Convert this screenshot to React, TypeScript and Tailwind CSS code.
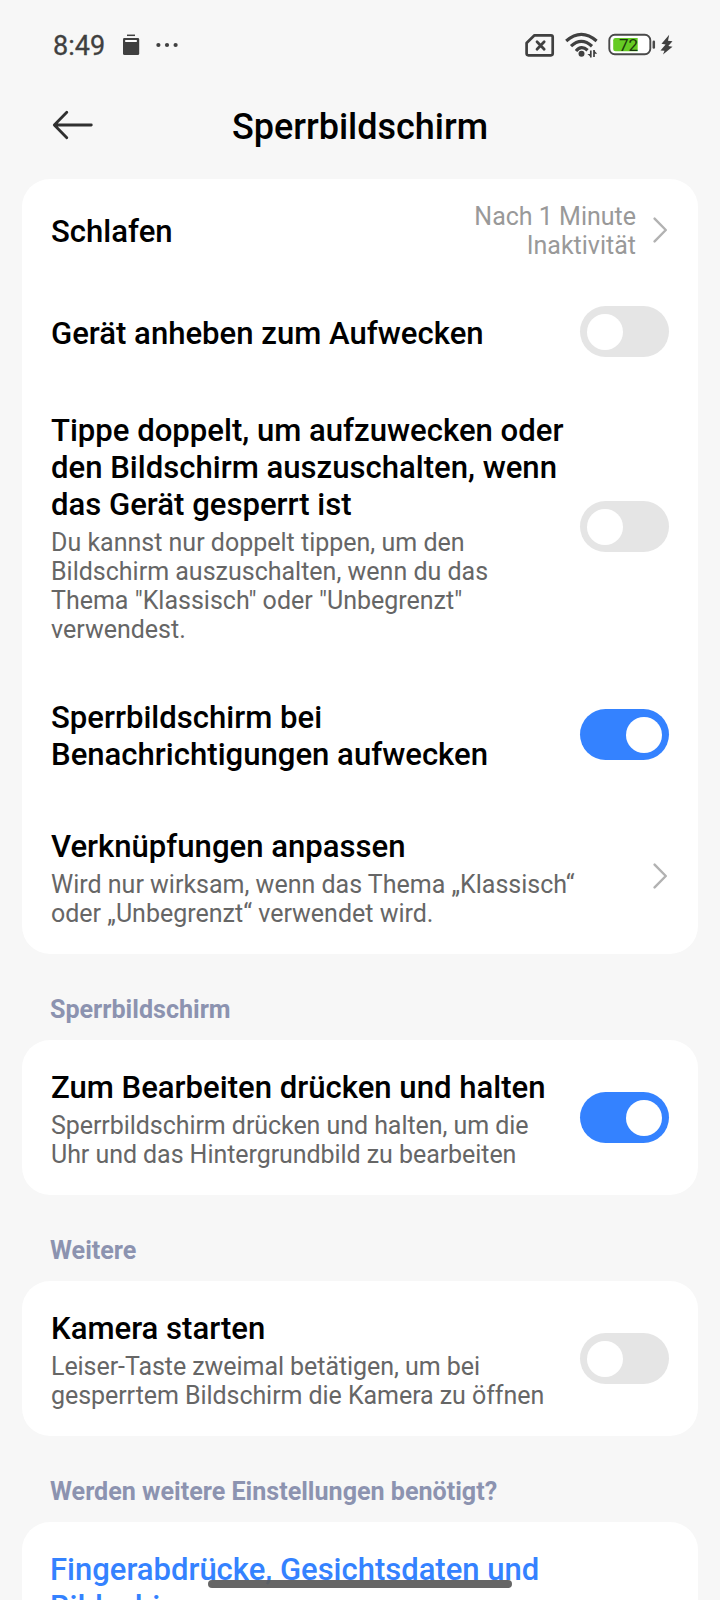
import type { ReactNode } from "react";

function Toggle({ on = false }: { on?: boolean }) {
  return (
    <button
      role="switch"
      aria-checked={on}
      className={`flex h-[51px] w-[89px] shrink-0 items-center rounded-full p-[7px] ${on ? "justify-end bg-[#3482ff]" : "justify-start bg-[#e5e5e5]"}`}
    >
      <span className="size-9 rounded-full bg-white" />
    </button>
  );
}

function Chevron() {
  return (
    <svg className="h-7 w-4 shrink-0" viewBox="0 0 16 28" fill="none" stroke="#b2b2b2" strokeWidth="2.4" strokeLinecap="round" strokeLinejoin="round">
      <path d="M1.600 2.600 12.800 14 1.600 25.400" />
    </svg>
  );
}

function Row({ title, sub, className, children }: { title: ReactNode; sub?: ReactNode; className: string; children: ReactNode }) {
  return (
    <div className={`flex items-center justify-between pr-[29px] pl-[29px] ${className}`}>
      <div className="pt-[3px] whitespace-nowrap">
        <div className="text-[31.1px] leading-[37px] font-medium text-black">{title}</div>
        {sub && <div className="mt-[5px] text-[25px] leading-[29px] text-[#666666]">{sub}</div>}
      </div>
      {children}
    </div>
  );
}

function Heading({ children }: { children: ReactNode }) {
  return <h2 className="flex h-[86px] items-center pt-6 pl-[28px] text-[25.1px] leading-[29px] font-bold text-[#8c93b0]">{children}</h2>;
}

function StatusBar() {
  return (
    <div className="flex h-[90px] items-center text-[#404040]">
      <span className="ml-[53px] w-[52px] pt-0.5 text-[27px] leading-8 whitespace-nowrap [-webkit-text-stroke:0.3px_#404040]">8:49</span>
      <svg className="ml-[17px] h-6 w-[18px]" viewBox="0 0 18 24">
        <path d="M5 2.300h8" stroke="#404040" strokeWidth="1.500" />
        <path d="M2.200 5h13.600q1.400 0 1.400 1.400V20.500q0 1.500-1.600 1.500H2.600Q1 22 1 20.500V6.400Q1 5 2.200 5Z" fill="#404040" />
        <path d="M3.200 8h11.600" stroke="#fff" strokeWidth="2" />
      </svg>
      <svg className="ml-4 h-6 w-6" viewBox="0 0 24 24" fill="#404040">
        <circle cx="2.400" cy="12" r="2.100" />
        <circle cx="11" cy="12" r="2.100" />
        <circle cx="19.600" cy="12" r="2.100" />
      </svg>
      <div className="mr-[47px] ml-auto flex items-center">
        <svg className="h-6 w-[30px]" viewBox="0 0 30 24" fill="none" stroke="#404040">
          <path d="M9.500 2.300H26q1.700 0 1.700 1.700V20.600q0 1.700-1.700 1.700H3.300q-1.700 0-1.700-1.700V10Z" strokeWidth="2.700" strokeLinejoin="round" />
          <path d="m12 8.700 7.200 7.600m0-7.600L12 16.300" strokeWidth="2.700" strokeLinecap="round" />
        </svg>
        <svg className="ml-2.5 h-[26px] w-[34px]" viewBox="0 0 34 26" fill="none" stroke="#404040" strokeWidth="3.200">
          <path d="M1.200 9Q16.300-4.200 31.600 9M6 14.200Q16.300 4.600 27 14.200M11 19Q16.300 12.600 22.600 18.300" />
          <circle cx="16.500" cy="21.800" r="3" fill="#404040" stroke="none" />
          <path d="M25.800 18.500v7M29 18v7" strokeWidth="1.700" />
          <path d="m26 25.300-3.600-3.300H26ZM29 18.200l3.200 3.600H29Z" fill="#404040" stroke="none" />
        </svg>
        <svg className="ml-[9px] h-6 w-[48px]" viewBox="0 0 48 24">
          <rect x="1.300" y="1.700" width="41" height="19.600" rx="5.500" fill="#fff" stroke="#4a4a4a" strokeWidth="1.900" />
          <path d="M7.500 5h22.200v13.300H7.500q-2.300 0-2.300-2.300V7.300Q5.200 5 7.500 5Z" fill="#65cb24" />
          <path d="M45.800 8.800v5.600" stroke="#4a4a4a" strokeWidth="2.500" strokeLinecap="round" />
          <text x="20.500" y="18" textAnchor="middle" fontFamily="Roboto, sans-serif" fontSize="17" fontWeight="400" fill="#1b3a0c">72</text>
        </svg>
        <svg className="ml-[4px] h-[22px] w-[13px]" viewBox="0 0 13 22" fill="#404040">
          <path d="M9.200.700 1.500 9.800 5.600 10.500.500 16.500 4.500 16.700 3 20.500 12.500 12.800 8.300 12 12.500 7.300 8 6.700Z" />
        </svg>
      </div>
    </div>
  );
}

export default function App() {
  return (
    <div className="relative h-[1600px] w-[720px] overflow-hidden bg-[#f7f7f7] font-[Roboto,sans-serif]">
      <StatusBar />
      <header className="grid h-[89px] grid-cols-[1fr_auto_1fr] items-center pb-4">
        <svg className="mb-1 ml-[52px] h-8 w-11" viewBox="0 0 44 32" fill="none" stroke="#303030" strokeWidth="2.800" strokeLinecap="round" strokeLinejoin="round">
          <path d="M14.800 3.300 2.300 16 14.800 28.700M2.500 16H39.300" />
        </svg>
        <h1 className="text-[36px] leading-[44px] font-medium text-black">Sperrbildschirm</h1>
      </header>

      <main className="px-[22px]">
        <section className="rounded-[28px] bg-white">
          <Row title="Schlafen" className="h-[102px]">
            <div className="flex items-center gap-[17px]">
              <div className="pt-0.5 text-right text-[25px] leading-[29px] text-[#999999]">Nach 1 Minute<br />Inaktivität</div>
              <Chevron />
            </div>
          </Row>
          <Row title="Gerät anheben zum Aufwecken" className="h-[101px]"><Toggle /></Row>
          <Row
            title={<>Tippe doppelt, um aufzuwecken oder<br />den Bildschirm auszuschalten, wenn<br />das Gerät gesperrt ist</>}
            sub={<>Du kannst nur doppelt tippen, um den<br />Bildschirm auszuschalten, wenn du das<br />Thema "Klassisch" oder "Unbegrenzt"<br />verwendest.</>}
            className="h-[289px]"
          ><Toggle /></Row>
          <Row title={<>Sperrbildschirm bei<br />Benachrichtigungen aufwecken</>} className="h-[127px]"><Toggle on /></Row>
          <Row
            title="Verknüpfungen anpassen"
            sub={<>Wird nur wirksam, wenn das Thema „Klassisch“<br />oder „Unbegrenzt“ verwendet wird.</>}
            className="h-[156px]"
          ><Chevron /></Row>
        </section>

        <Heading>Sperrbildschirm</Heading>
        <section className="rounded-[28px] bg-white">
          <Row
            title="Zum Bearbeiten drücken und halten"
            sub={<span className="tracking-[-0.06px]">Sperrbildschirm drücken und halten, um die<br />Uhr und das Hintergrundbild zu bearbeiten</span>}
            className="h-[155px]"
          ><Toggle on /></Row>
        </section>

        <Heading>Weitere</Heading>
        <section className="rounded-[28px] bg-white">
          <Row
            title="Kamera starten"
            sub={<span className="tracking-[-0.06px]">Leiser-Taste zweimal betätigen, um bei<br />gesperrtem Bildschirm die Kamera zu öffnen</span>}
            className="h-[155px]"
          ><Toggle /></Row>
        </section>

        <Heading>Werden weitere Einstellungen benötigt?</Heading>
        <section className="h-40 rounded-[28px] bg-white px-7 pt-[29px] text-[31px] leading-[37px] font-medium text-[#3482ff]">
          Fingerabdrücke, Gesichtsdaten und<br />Bildschirmsperre
        </section>
      </main>
      <div className="absolute top-[1580px] left-[208px] h-2 w-[304px] rounded-full bg-[#5e5e5e]/95" />
    </div>
  );
}
